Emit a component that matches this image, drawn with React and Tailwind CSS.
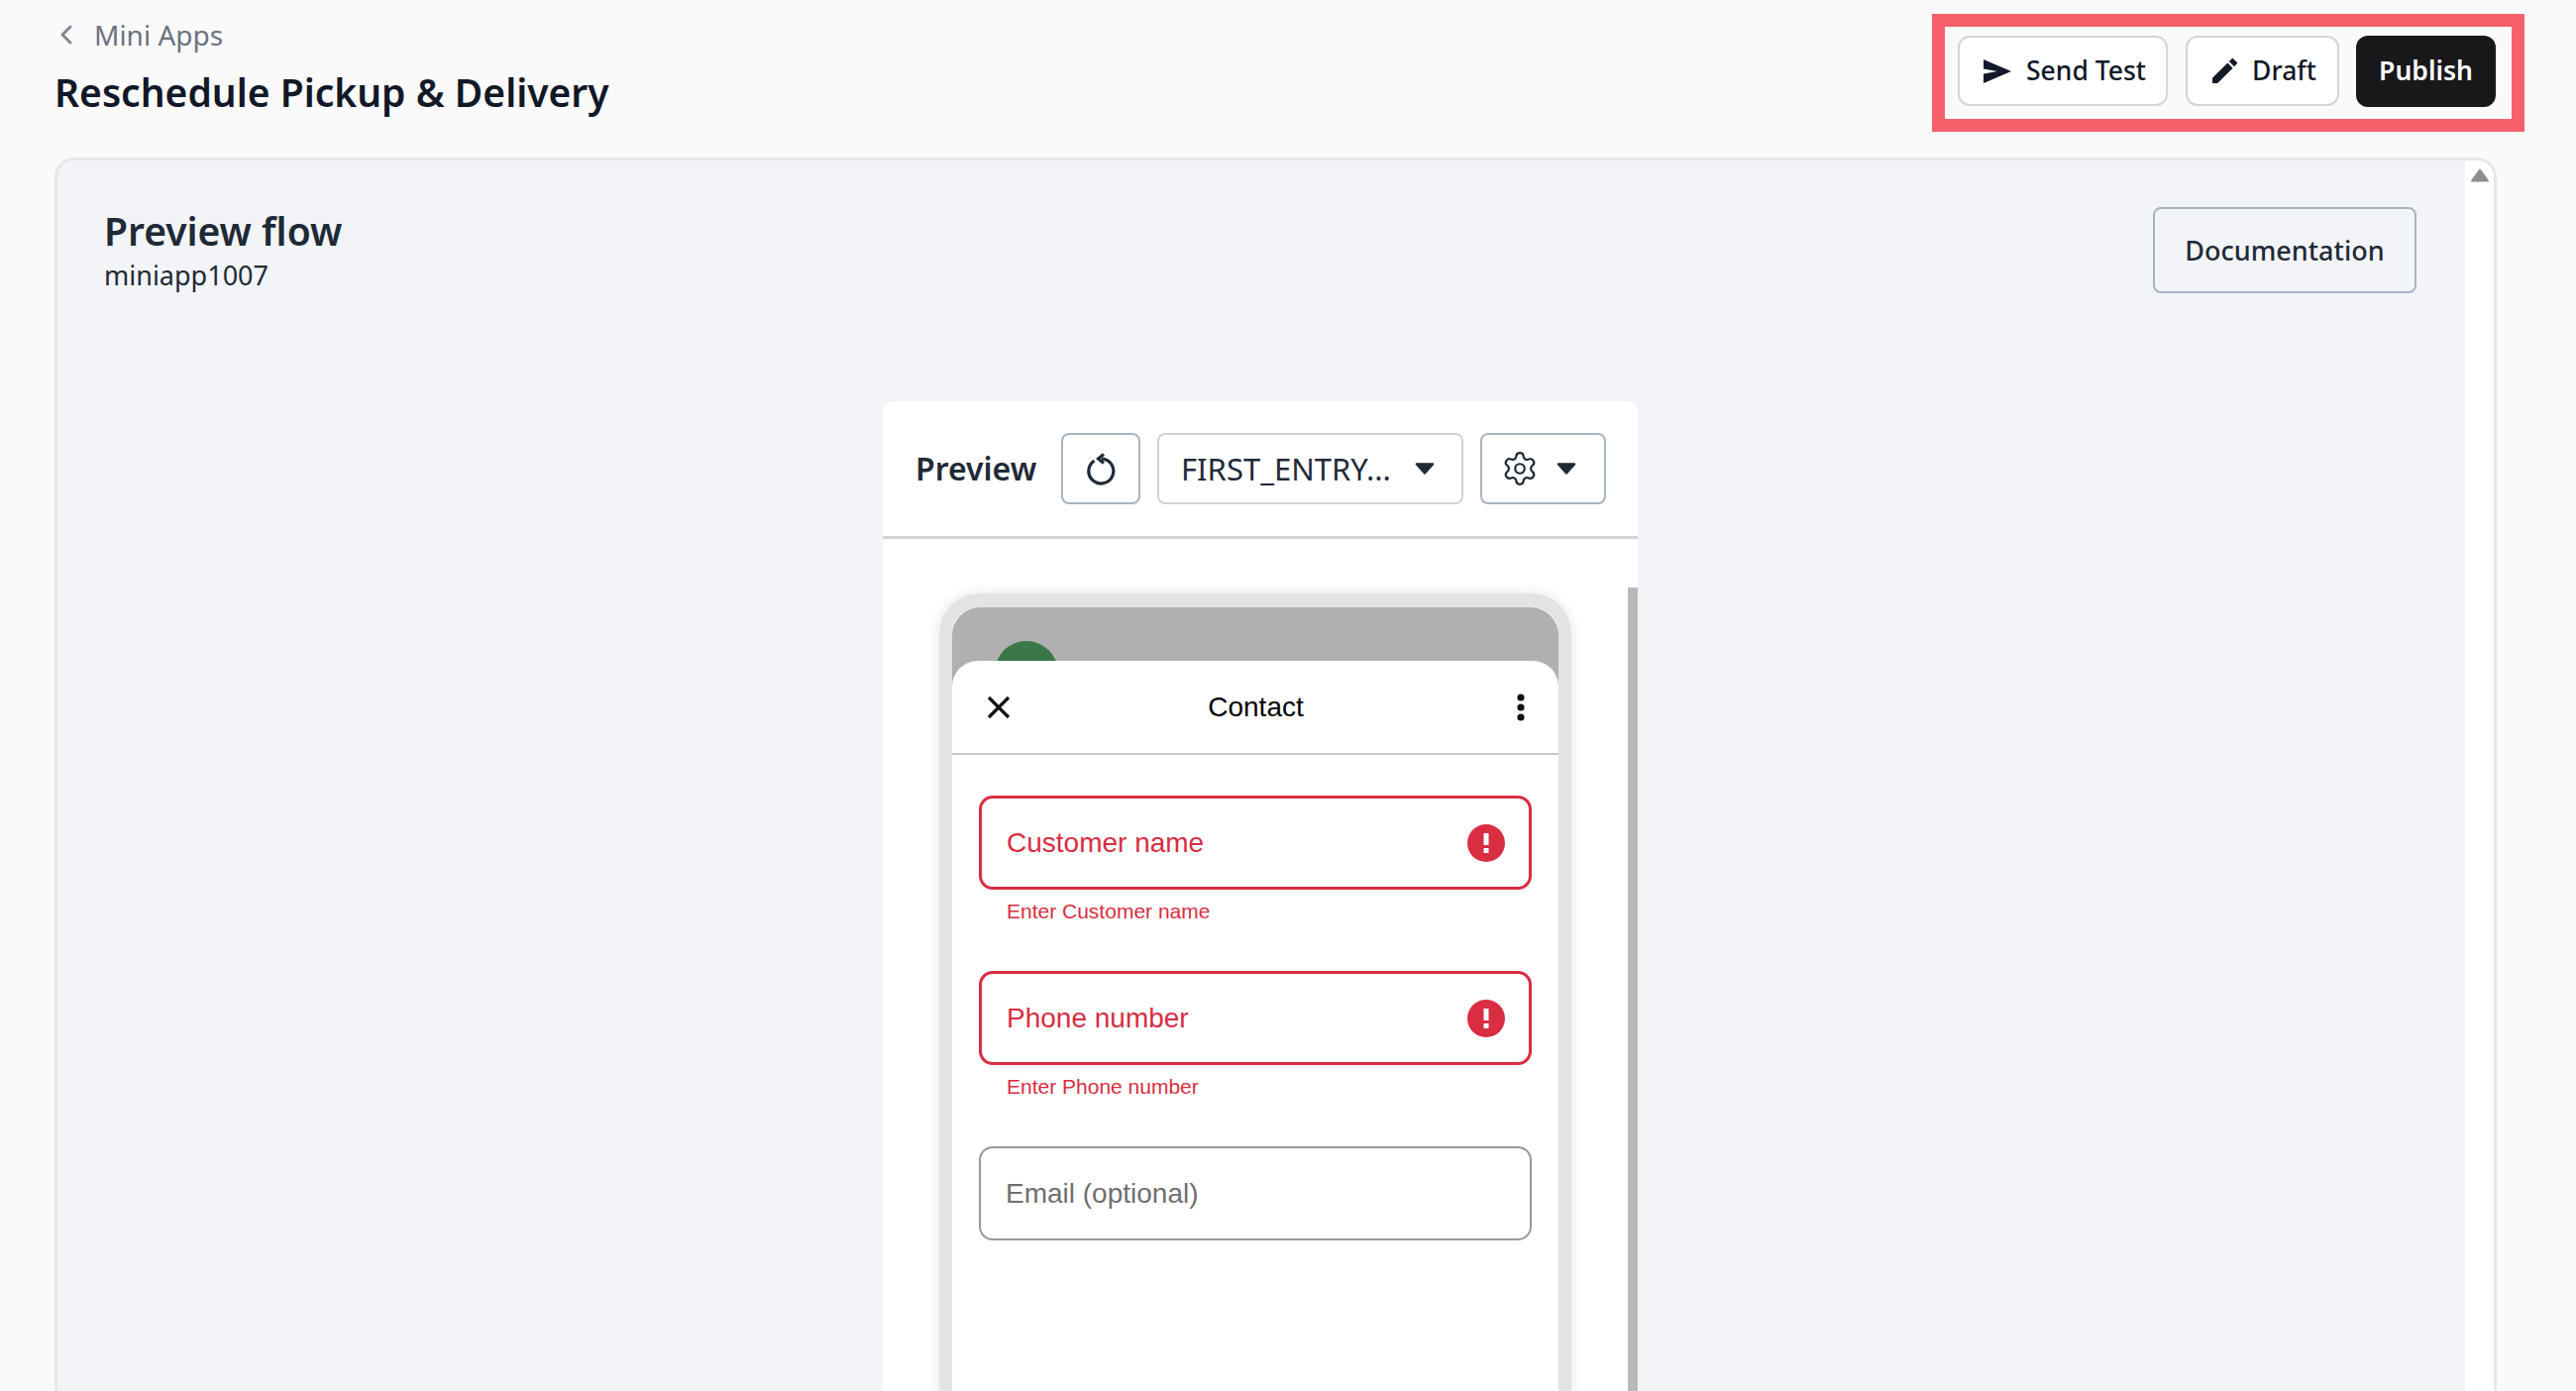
import { ChevronLeft, Settings } from 'lucide-react';

const uiFont = 'font-["Noto_Sans",sans-serif]';
const appFont = 'font-["Liberation_Sans",sans-serif]';

function Caret() {
  return (
    <svg width="20" height="12" viewBox="0 0 20 12" className="shrink-0">
      <path d="M2 1.5h16L10 10.5z" fill="#1f2a37" stroke="#1f2a37" strokeWidth="2.5" strokeLinejoin="round" />
    </svg>
  );
}

function ErrorIcon() {
  return (
    <span className="flex h-[38px] w-[38px] items-center justify-center rounded-full bg-[#d92d42]">
      <svg width="6" height="20" viewBox="0 0 6 20">
        <rect x="0.5" y="0" width="5" height="12" fill="#fff" />
        <rect x="0.5" y="15" width="5" height="5" fill="#fff" />
      </svg>
    </span>
  );
}

function Field({ label, error }) {
  return (
    <div>
      <div
        className={`flex h-[95px] items-center justify-between rounded-[14px] pl-[25px] pr-[24px] ${
          error ? 'border-[3px] border-[#d92d42] text-[#d92d42]' : 'border-2 border-[#999999] text-[#6f6f6f]'
        }`}
      >
        <span className="text-[28px]">{label}</span>
        {error && <ErrorIcon />}
      </div>
      {error && <p className="mt-[9px] h-[26px] pl-[28px] text-[21px] leading-[26px] text-[#d92d42]">{error}</p>}
    </div>
  );
}

function PreviewCard() {
  return (
    <div className="ml-[833px] w-[762px] rounded-t-[10px] bg-white">
      <div className={`${uiFont} flex h-[139px] items-center border-b-[3px] border-[#d1d5db] pl-[33px]`}>
        <span className="w-[147px] text-[32px] font-semibold text-[#1f2a37]">Preview</span>
        <button className="flex h-[72px] w-[80px] items-center justify-center rounded-[8px] border-2 border-[#a9b4c2]">
          <svg width="30" height="33" viewBox="0 0 30 33" fill="none" stroke="#1f2a37" strokeWidth="3.2">
            <path d="M16 6A12.5 12.5 0 1 1 8.5 8" />
            <path d="M18 1.5L12.5 6L18 10.5" />
          </svg>
        </button>
        <button className="ml-[17px] flex h-[72px] w-[309px] items-center justify-between rounded-[8px] border-2 border-[#cdd3dc] pl-[22px] pr-[27px] text-[31px] text-[#1f2a37]">
          <span>FIRST_ENTRY...</span>
          <Caret />
        </button>
        <button className="ml-[17px] flex h-[72px] w-[127px] items-center justify-between rounded-[8px] border-2 border-[#a9b4c2] pl-[19px] pr-[28px]">
          <Settings size={38} strokeWidth={1.4} className="text-[#1f2a37]" />
          <Caret />
        </button>
      </div>

      <div className="flex">
        <div className="flex-1 pl-[57px] pt-[55px]">
          <div className="h-[900px] w-[638px] rounded-[40px] border-[13px] border-b-0 border-t-[14px] border-[#e3e3e3] shadow-[0_0_14px_rgba(0,0,0,0.1)]">
            <div className={`${appFont} h-full overflow-hidden rounded-t-[28px] bg-[#b0b0b0]`}>
              <div className="h-[54px] overflow-hidden pl-[43px] pt-[34px]">
                <div className="h-[64px] w-[64px] rounded-full bg-[#3b7849]" />
              </div>
              <div className="h-full rounded-t-[26px] bg-white">
                <div className="grid h-[95px] grid-cols-[1fr_auto_1fr] items-center border-b-2 border-[#c8c8c8] pl-[35px] pr-[34px] text-black">
                  <svg width="24" height="24" viewBox="0 0 24 24" stroke="#111" strokeWidth="3.2" strokeLinecap="butt">
                    <path d="M2 2l20 20M22 2L2 22" />
                  </svg>
                  <span className="text-[28px]">Contact</span>
                  <svg width="8" height="28" viewBox="0 0 8 28" fill="#111" className="justify-self-end">
                    <circle cx="4" cy="4" r="3.6" />
                    <circle cx="4" cy="14" r="3.6" />
                    <circle cx="4" cy="24" r="3.6" />
                  </svg>
                </div>
                <div className="flex flex-col gap-[47px] px-[27px] pt-[41px]">
                  <Field label="Customer name" error="Enter Customer name" />
                  <Field label="Phone number" error="Enter Phone number" />
                  <Field label="Email (optional)" />
                </div>
              </div>
            </div>
          </div>
        </div>
        <div className="mt-[49px] h-[900px] w-[10px] bg-[#b9b9b9]" />
      </div>
    </div>
  );
}

export default function App() {
  return (
    <div className={`${uiFont} h-[1404px] overflow-hidden bg-[#fafafa]`}>
      <header className="flex justify-between pl-[55px] pr-[52px] pt-[14px]">
        <div>
          <div className="-mt-[1px] flex h-[44px] items-center text-[28px] text-[#6b7280]">
            <ChevronLeft size={32} strokeWidth={2.2} className="-ml-[4px] text-[#7f8794]" />
            <span className="ml-[12px]">Mini Apps</span>
          </div>
          <h1 className="mt-[13px] text-[39px] font-semibold leading-[46px] text-[#111827]">
            Reschedule Pickup &amp; Delivery
          </h1>
        </div>

        {/* annotation box round the actions */}
        <div className="flex h-[119px] items-start border-[13px] border-[#f5606a] pl-[13px] pr-[16px] pt-[9px] text-[26.5px] font-medium">
          <button className="flex h-[71px] w-[212px] items-center justify-center gap-[15px] rounded-[12px] border-2 border-[#d1d5db] bg-white pl-[4px] text-[#111827]">
            <svg width="28" height="24" viewBox="0 0 28 24" fill="#111827">
              <path d="M0 0L28 12L0 24V14.5L14 12L0 9.5z" />
            </svg>
            Send Test
          </button>
          <button className="ml-[18px] flex h-[71px] w-[155px] items-center justify-center gap-[15px] rounded-[12px] border-2 border-[#d1d5db] bg-white pl-[4px] text-[#111827]">
            <svg width="25" height="25" viewBox="3 3 18 18" fill="#111827">
              <path d="M3 17.25V21h3.75L17.81 9.94l-3.75-3.75L3 17.25zM20.71 7.04a1 1 0 000-1.41l-2.34-2.34a1 1 0 00-1.41 0l-1.83 1.83 3.75 3.75 1.83-1.83z" />
            </svg>
            Draft
          </button>
          <button className="ml-[17px] flex h-[72px] w-[141px] items-center justify-center rounded-[12px] bg-[#18181b] font-semibold text-white">
            Publish
          </button>
        </div>
      </header>

      <main className="ml-[55px] mt-[26px] flex w-[2465px] overflow-hidden rounded-t-[20px] border-[3px] border-b-0 border-[#e5e7eb] bg-[#f3f4f8]">
        <div className="flex-1 pt-[47px]">
          <div className="flex items-start justify-between pl-[47px] pr-[49px]">
            <div>
              <h2 className="-mt-[1px] text-[39px] font-semibold leading-[50px] text-[#1f2a37]">Preview flow</h2>
              <p className="mt-[1px] text-[27px] leading-[38px] text-[#1f2a37]">miniapp1007</p>
            </div>
            <button className="h-[87px] w-[266px] rounded-[8px] border-2 border-[#a9b4c2] pt-[2px] text-[27px] font-medium text-[#1f2a37]">
              Documentation
            </button>
          </div>
          <div className="mt-[108px]">
            <PreviewCard />
          </div>
        </div>
        <div className="flex h-[1300px] w-[29px] justify-center bg-white pt-[8px]">
          <svg width="18" height="14" viewBox="0 0 18 14">
            <path d="M9 1.5L17 12.5H1z" fill="#8e8e8e" stroke="#8e8e8e" strokeWidth="2" strokeLinejoin="round" />
          </svg>
        </div>
      </main>
    </div>
  );
}
